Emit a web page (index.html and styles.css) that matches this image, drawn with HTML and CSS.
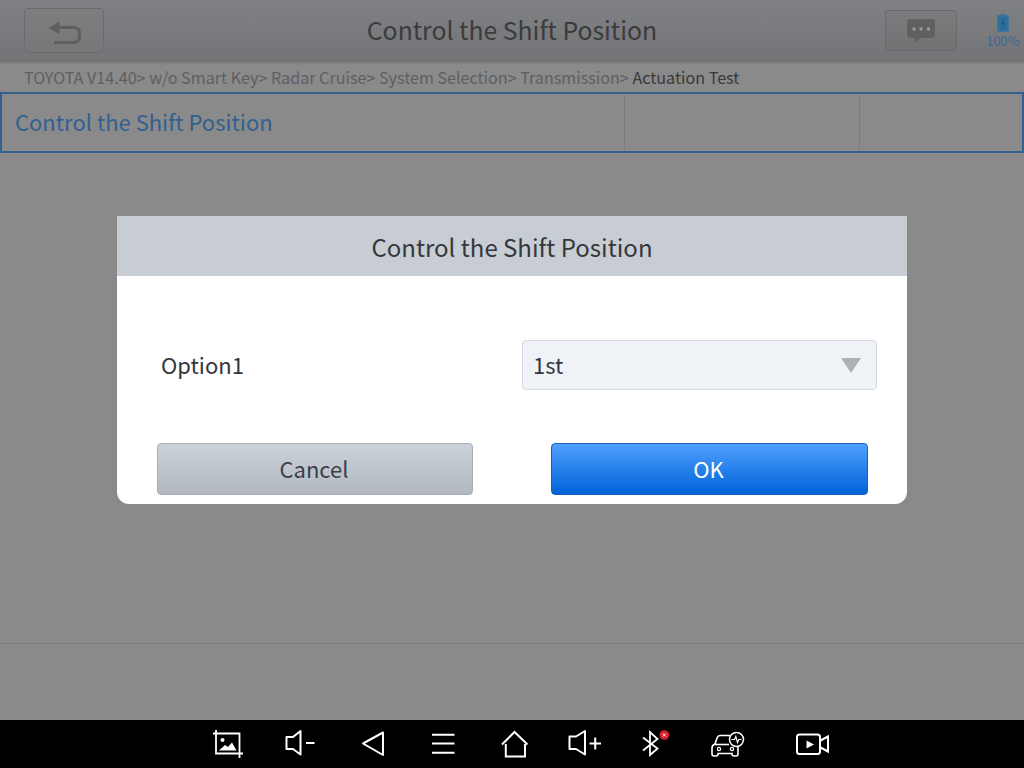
FILE: index.html
```html
<!DOCTYPE html>
<html lang="en">
<head>
  <meta charset="UTF-8" />
  <title>Control the Shift Position</title>
  <link rel="stylesheet" href="styles.css">
</head>
<body>

<div class="screen">
  <!-- TOP BAR -->
  <div class="top-bar">
    <button class="back-button">
      <svg width="34" height="30" viewBox="47 14 34 30">
        <path d="M49 26 59.5 19.3V32Z" fill="#5f5d5f"/>
        <path d="M58 25.5H73Q79.5 25.5 79.5 31V35Q79.5 40.5 73 40.5H54" fill="none" stroke="#5f5d5f" stroke-width="3"/>
      </svg>
    </button>
    <h1 class="top-title">Control the Shift Position</h1>
    <button class="message-button">
      <svg width="30" height="26" viewBox="906 18 30 26">
        <path d="M910 19H932Q935 19 935 22V35Q935 38 932 38H920L915 43V38H910Q907 38 907 35V22Q907 19 910 19Z" fill="#5f6062"/>
        <circle cx="914" cy="29" r="1.7" fill="#999"/>
        <circle cx="921" cy="29" r="1.7" fill="#999"/>
        <circle cx="928.5" cy="29" r="1.7" fill="#999"/>
      </svg>
    </button>
    <div class="battery">
      <svg width="12" height="18" viewBox="0 0 12 18">
        <rect x="3.5" y="0" width="5" height="2" fill="#4a6f94"/>
        <rect x="0.75" y="1.75" width="10.5" height="15.5" rx="1" fill="#2a6f9c" stroke="#44709c" stroke-width="1.5"/>
        <path d="M7 4 4 10H6L5 15 8 8H6Z" fill="#22557c"/>
      </svg>
      <span class="battery-text">100%</span>
    </div>
  </div>

  <!-- BREADCRUMB -->
  <div class="breadcrumb">TOYOTA V14.40&gt; w/o Smart Key&gt; Radar Cruise&gt; System Selection&gt; Transmission&gt;<span class="breadcrumb-current"> Actuation Test</span></div>

  <!-- LIST -->
  <div class="list-row">
    <div class="list-cell list-cell-name">Control the Shift Position</div>
    <div class="list-cell list-cell-mid"></div>
    <div class="list-cell list-cell-end"></div>
  </div>

  <div class="content"></div>
  <div class="footer"></div>

  <!-- SYSTEM BAR -->
  <div class="nav-bar">
    <svg width="56" height="48" viewBox="208 0 56 48">
      <path d="M216 10V33.5H243M213 13.5H239.5V38" fill="none" stroke="#fff" stroke-width="1.8"/>
      <circle cx="222.5" cy="20" r="2" fill="#fff"/>
      <path d="M219 30.5 225 25 228 27 232 22.5 236.5 30.5Z" fill="#fff"/>
    </svg>
    <svg width="72" height="48" viewBox="264 0 72 48">
      <path d="M286.5 17H293L300.5 11V34.5L293 29H286.5Z" fill="none" stroke="#fff" stroke-width="2" stroke-linejoin="round"/>
      <path d="M306 23H314.5" stroke="#fff" stroke-width="2"/>
    </svg>
    <svg width="72" height="48" viewBox="336 0 72 48">
      <path d="M363 23.5 383 12.5V35Z" fill="none" stroke="#fff" stroke-width="2" stroke-linejoin="round"/>
    </svg>
    <svg width="71" height="48" viewBox="408 0 71 48">
      <path d="M432 14.8H454.5M432 23.5H454.5M432 32.7H454.5" stroke="#fff" stroke-width="2"/>
    </svg>
    <svg width="71" height="48" viewBox="479 0 71 48">
      <path d="M502 24.5 514.5 12 527.5 24.5M505.8 24V36.5H525V24" fill="none" stroke="#fff" stroke-width="2"/>
    </svg>
    <svg width="68" height="48" viewBox="550 0 68 48">
      <path d="M569.5 16.5H576L585 11V34.5L576 29H569.5Z" fill="none" stroke="#fff" stroke-width="2" stroke-linejoin="round"/>
      <path d="M589.5 23.5H601M595.2 17.5V29.5" stroke="#fff" stroke-width="2"/>
    </svg>
    <svg width="72" height="48" viewBox="618 0 72 48">
      <path d="M643 17.5 657.5 28.5 650 35V12L657.5 19 643 30.5" fill="none" stroke="#fff" stroke-width="1.8"/>
      <circle cx="664.3" cy="15" r="4.8" fill="#d9202a"/>
      <path d="M662.8 13.5 665.8 16.5M665.8 13.5 662.8 16.5" stroke="#fff" stroke-width="1"/>
    </svg>
    <svg width="80" height="48" viewBox="690 0 80 48">
      <path d="M730 15.5H720Q718 15.5 717 18L715 24Q712 25 712 28V34Q712 36 714 36H716Q718 36 718 34V33.5H732V34Q732 36 734 36H736Q738 36 738 34V27" fill="none" stroke="#fff" stroke-width="1.6"/>
      <path d="M715 24.5H729" stroke="#fff" stroke-width="1.6"/>
      <circle cx="719" cy="29" r="1.6" fill="none" stroke="#fff" stroke-width="1.2"/>
      <circle cx="732" cy="29" r="1.6" fill="none" stroke="#fff" stroke-width="1.2"/>
      <circle cx="736.5" cy="19.5" r="7" fill="#000" stroke="#fff" stroke-width="1.5"/>
      <path d="M731.5 19.5H734.5L735.8 16.5 737.5 22.5 738.8 19.5H741.5" fill="none" stroke="#fff" stroke-width="1.2"/>
    </svg>
    <svg width="70" height="48" viewBox="770 0 70 48">
      <rect x="797" y="14.5" width="23" height="19.5" rx="2.5" fill="none" stroke="#fff" stroke-width="2"/>
      <path d="M806.5 20.5 814 24.5 806.5 28.5Z" fill="#fff"/>
      <path d="M820.5 20.5 828 16.5V31.5L820.5 27.5" fill="none" stroke="#fff" stroke-width="2"/>
    </svg>
  </div>

  <!-- DIALOG -->
  <div class="dialog">
    <div class="dialog-head">Control the Shift Position</div>
    <div class="dialog-body">
      <div class="option-row">
        <span class="option-label">Option1</span>
        <div class="option-select">
          <span>1st</span>
          <span class="select-arrow"></span>
        </div>
      </div>
      <div class="dialog-buttons">
        <button class="dialog-button cancel-button">Cancel</button>
        <button class="dialog-button ok-button">OK</button>
      </div>
    </div>
  </div>
</div>

</body>
</html>
```

FILE: styles.css
```css
* {
  box-sizing: border-box;
  font-family: "Noto Sans CJK SC", "Noto Sans", sans-serif;
}

body {
  margin: 0;
  background: #8a8a8a;
}

.screen {
  position: relative;
  width: 1024px;
  height: 768px;
  display: flex;
  flex-direction: column;
  overflow: hidden;
}

.top-bar {
  height: 62px;
  flex: none;
  display: flex;
  align-items: flex-start;
  background: linear-gradient(180deg, #808184 0%, #737476 100%);
  box-shadow: 0 1px 2px rgba(0,0,0,0.12);
  z-index: 1;
}

.back-button {
  width: 80px;
  height: 45px;
  flex: none;
  margin: 8px 0 0 24px;
  padding: 0;
  display: flex;
  align-items: center;
  justify-content: center;
  background: linear-gradient(180deg, #7d7e80 0%, #767779 100%);
  border: 1px solid #6b6c6e;
  border-radius: 3px;
}

.top-title {
  width: 781px;
  flex: none;
  margin: 9px 0 0;
  padding-left: 35px;
  font-size: 24.8px;
  line-height: 40px;
  font-weight: 400;
  color: #3a3b3d;
  text-align: center;
}

.message-button {
  width: 72px;
  height: 41px;
  flex: none;
  margin-top: 10px;
  padding: 0;
  display: flex;
  align-items: center;
  justify-content: center;
  background: linear-gradient(180deg, #7b7c7e 0%, #717274 100%);
  border: 1px solid #696a6c;
  border-radius: 3px;
}

.battery {
  width: 44px;
  flex: none;
  margin: 14px 0 0 24px;
  display: flex;
  flex-direction: column;
  align-items: center;
}

.battery svg {
  display: block;
  margin-left: -1px;
}

.battery-text {
  font-size: 13px;
  line-height: 18px;
  color: #3d6897;
}

.breadcrumb {
  height: 30px;
  flex: none;
  padding-left: 24px;
  font-size: 16.14px;
  line-height: 31px;
  color: #5e5f61;
  white-space: nowrap;
}

.breadcrumb-current {
  color: #38393b;
}

.list-row {
  height: 61px;
  flex: none;
  display: flex;
  border: 2px solid #33608f;
}

.list-cell {
  height: 100%;
}

.list-cell-name {
  width: 622px;
  padding-left: 13px;
  font-size: 22px;
  line-height: 55px;
  color: #33608f;
}

.list-cell-mid {
  width: 235px;
  border-left: 1px solid #7c7c7c;
}

.list-cell-end {
  flex: 1;
  border-left: 1px solid #7c7c7c;
}

.content {
  flex: 1;
  border-bottom: 1px solid #7d7d7d;
}

.footer {
  height: 76px;
  flex: none;
}

.nav-bar {
  height: 48px;
  flex: none;
  display: flex;
  padding-left: 208px;
  background: #000;
}

.nav-bar svg {
  display: block;
  flex: none;
}

.dialog {
  position: absolute;
  left: 117px;
  top: 216px;
  width: 790px;
  height: 288px;
  background: #fff;
  border-radius: 0 0 12px 12px;
  overflow: hidden;
}

.dialog-head {
  height: 60px;
  font-size: 24px;
  line-height: 62px;
  color: #34373c;
  text-align: center;
  background: #c8cdd4;
}

.dialog-body {
  padding: 64px 30px 0 40px;
}

.option-row {
  display: flex;
  align-items: center;
  height: 50px;
}

.option-label {
  width: 365px;
  padding: 0 0 2px 4px;
  font-size: 22px;
  color: #34373c;
}

.option-select {
  width: 355px;
  height: 50px;
  display: flex;
  align-items: center;
  justify-content: space-between;
  padding: 0 15px 2px 10px;
  font-size: 22px;
  color: #34373c;
  background: #eff2f7;
  border: 1px solid #d5d8dd;
  border-radius: 4px;
}

.select-arrow {
  width: 0;
  height: 0;
  margin-top: 2px;
  border-left: 10.5px solid transparent;
  border-right: 10.5px solid transparent;
  border-top: 15px solid #aeb0b4;
}

.dialog-buttons {
  display: flex;
  justify-content: space-between;
  margin-top: 53px;
  padding-right: 9px;
}

.dialog-button {
  width: 316px;
  height: 52px;
  padding: 0 2px 2px 0;
  font-size: 22px;
  border-radius: 4px;
}

.cancel-button {
  color: #3c4048;
  background: linear-gradient(180deg, #cbd2da 0%, #b2b8c0 100%);
  border: 1px solid #a9adb3;
}

.ok-button {
  width: 317px;
  color: #fff;
  background: linear-gradient(180deg, #4fa0fc 0%, #0062da 100%);
  border: 1px solid #1a62b8;
}
```
